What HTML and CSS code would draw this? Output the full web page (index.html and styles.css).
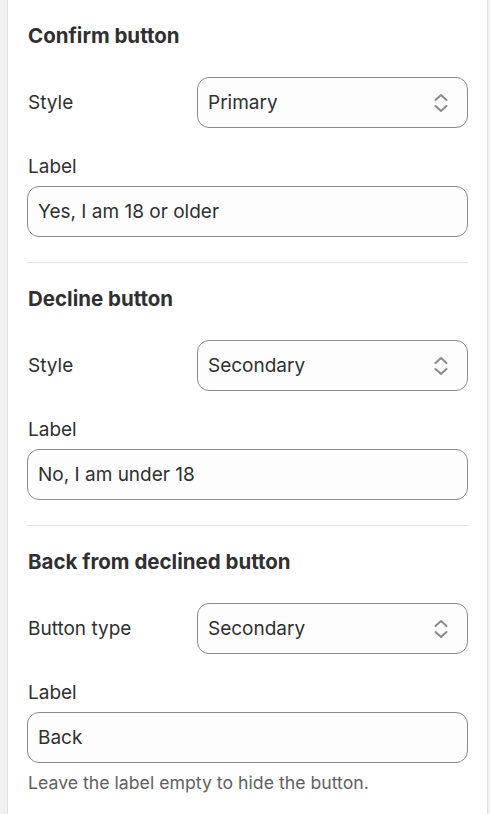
FILE: index.html
```html
<!DOCTYPE html>
<html lang="en">
<head>
    <meta charset="UTF-8">
    <meta name="viewport" content="width=device-width, initial-scale=1.0">
    <title>Age verification - Buttons</title>
    <link rel="stylesheet" href="styles.css">
</head>
<body>
    <div class="panel">
        <div class="section">
            <h2>Confirm button</h2>
            <div class="row">
                <label>Style</label>
                <div class="select">
                    <span>Primary</span>
                    <svg viewBox="0 0 24 24" width="24" height="24"><path d="M6.5 9 12 4 17.5 9M6.5 15 12 20 17.5 15" fill="none" stroke="currentColor" stroke-width="2" stroke-linecap="round" stroke-linejoin="round"/></svg>
                </div>
            </div>
            <div class="field">
                <label>Label</label>
                <div class="input">Yes, I am 18 or older</div>
            </div>
        </div>

        <div class="section">
            <h2>Decline button</h2>
            <div class="row">
                <label>Style</label>
                <div class="select">
                    <span>Secondary</span>
                    <svg viewBox="0 0 24 24" width="24" height="24"><path d="M6.5 9 12 4 17.5 9M6.5 15 12 20 17.5 15" fill="none" stroke="currentColor" stroke-width="2" stroke-linecap="round" stroke-linejoin="round"/></svg>
                </div>
            </div>
            <div class="field">
                <label>Label</label>
                <div class="input">No, I am under 18</div>
            </div>
        </div>

        <div class="section">
            <h2>Back from declined button</h2>
            <div class="row">
                <label>Button type</label>
                <div class="select">
                    <span>Secondary</span>
                    <svg viewBox="0 0 24 24" width="24" height="24"><path d="M6.5 9 12 4 17.5 9M6.5 15 12 20 17.5 15" fill="none" stroke="currentColor" stroke-width="2" stroke-linecap="round" stroke-linejoin="round"/></svg>
                </div>
            </div>
            <div class="field">
                <label>Label</label>
                <div class="input">Back</div>
                <p class="help">Leave the label empty to hide the button.</p>
            </div>
        </div>
    </div>
</body>
</html>
```

FILE: styles.css
```css
body {
    margin: 0;
    background: #f1f1f1;
    font-family: Inter, 'Noto Sans', sans-serif;
    color: #303030;
    font-size: 19px;
}
.panel {
    margin-left: 7px;
    width: 481px;
    min-height: 814px;
    background: #fff;
    border-left: 1px solid #e3e3e3;
    border-right: 1px solid #e3e3e3;
    box-sizing: border-box;
    padding: 0 19px;
}
.section {
    padding: 22px 0 25px;
    border-bottom: 1px solid #e3e3e3;
}
.section:last-child {
    border-bottom: none;
}
h2 {
    margin: 0 0 27px;
    font-size: 20.5px;
    font-weight: 700;
    line-height: 28px;
    padding-left: 1px;
}
.row {
    display: grid;
    grid-template-columns: 170px 1fr;
    align-items: center;
}
.row label,
.field label {
    padding-left: 1px;
    line-height: 24px;
}
.field {
    margin-top: 27px;
}
.field label {
    display: block;
    margin-bottom: 7px;
}
.select,
.input {
    height: 51px;
    box-sizing: border-box;
    border: 1px solid #8a8a8a;
    border-radius: 12px;
    background: #fdfdfd;
    display: flex;
    align-items: center;
    padding: 0 10px;
}
.select {
    justify-content: space-between;
    padding-right: 14px;
}
.select svg {
    color: #8a8a8a;
}
.help {
    margin: 8px 0 0 1px;
    font-size: 17.7px;
    color: #616161;
    line-height: 24px;
}
```
